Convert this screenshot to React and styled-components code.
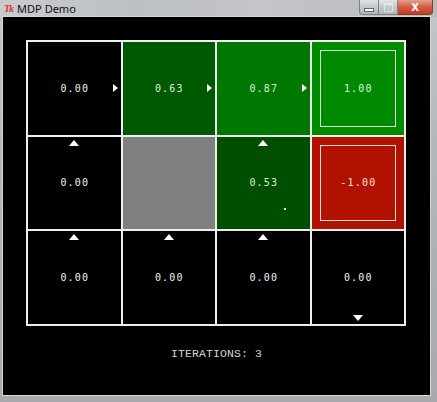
import React from "react";
import styled, { createGlobalStyle } from "styled-components";

const GlobalStyle = createGlobalStyle`
  html, body {
    margin: 0;
    padding: 0;
    background: #a9abae;
    overflow: hidden;
  }
`;

const Window = styled.div`
  width: 437px;
  height: 402px;
  display: flex;
  flex-direction: column;
  background: linear-gradient(180deg, #c4c7ca 0%, #b3b6b9 40%, #a7a9ac 100%);
  box-sizing: border-box;
`;

const TitleBar = styled.div`
  height: 17px;
  display: flex;
  align-items: flex-start;
  justify-content: space-between;
  background: linear-gradient(90deg, #c9cbce 0%, #bcbfc3 30%, #c3c5c8 60%, #b9bcbf 100%);
`;

const TitleLeft = styled.div`
  display: flex;
  align-items: center;
  gap: 4px;
  padding: 2px 0 0 4px;
  height: 13px;
`;

const TkIcon = styled.span`
  font-family: "Liberation Serif", serif;
  font-style: italic;
  font-weight: bold;
  font-size: 10px;
  line-height: 10px;
  color: #e0352a;
  letter-spacing: -1px;
`;

const Title = styled.span`
  font-family: "Noto Sans", "Liberation Sans", sans-serif;
  font-size: 11px;
  line-height: 12px;
  color: #111;
`;

const Buttons = styled.div`
  display: flex;
  margin-right: 4px;
`;

const CtlButton = styled.div`
  width: ${(p) => p.w}px;
  height: 15px;
  box-sizing: border-box;
  border: 1px solid ${(p) => (p.close ? "#8a3a2c" : "#7d8084")};
  border-top: none;
  border-left: ${(p) => (p.first ? "1px solid #7d8084" : "none")};
  border-radius: ${(p) => (p.first ? "0 0 0 4px" : p.close ? "0 0 4px 0" : "0")};
  background: ${(p) =>
    p.close
      ? "linear-gradient(180deg, #e6a08c 0%, #d4644a 45%, #c2391f 100%)"
      : "linear-gradient(180deg, #e2e4e6 0%, #c8cbce 45%, #b2b6ba 100%)"};
  display: flex;
  align-items: center;
  justify-content: center;
  color: #fff;
  font-family: "DejaVu Sans", sans-serif;
  font-weight: bold;
  font-size: 10px;
`;

const MinGlyph = styled.div`
  width: 8px;
  height: 2px;
  margin-top: 5px;
  background: #fff;
  border: 1px solid #666;
`;

const MaxGlyph = styled.div`
  width: 7px;
  height: 6px;
  border: 1px solid #eee;
  border-top-width: 2px;
  opacity: 0.7;
`;

const Client = styled.div`
  flex: 1;
  margin: 0 7px 7px 3px;
  background: #000;
  box-shadow: 0 0 0 1px #d4d6d8;
  display: flex;
  flex-direction: column;
  align-items: flex-start;
  padding: 23px 0 0 23px;
  box-sizing: border-box;
`;

const Grid = styled.div`
  display: grid;
  grid-template-columns: repeat(4, 92.5px);
  grid-template-rows: repeat(3, 92.5px);
  gap: 2px;
  padding: 2px;
  background: #eeeeee;
`;

const Cell = styled.div`
  position: relative;
  background: ${(p) => p.bg};
  display: flex;
  align-items: center;
  justify-content: center;
`;

const Value = styled.span`
  font-family: "DejaVu Sans Mono", monospace;
  font-size: 10px;
  letter-spacing: 1.2px;
  padding-left: 1.2px;
  color: ${(p) => p.color || "#f2f2f2"};
`;

const TerminalBox = styled.div`
  position: absolute;
  inset: 8px;
  border: 1.5px solid ${(p) => p.edge};
`;

const Arrow = styled.div`
  position: absolute;
  width: 0;
  height: 0;
  ${(p) =>
    p.dir === "right" &&
    `right: 3px; top: 42px;
     border-top: 4.5px solid transparent;
     border-bottom: 4.5px solid transparent;
     border-left: 5px solid #fff;`}
  ${(p) =>
    p.dir === "up" &&
    `top: 3px; left: 41px;
     border-left: 5px solid transparent;
     border-right: 5px solid transparent;
     border-bottom: 6px solid #fff;`}
  ${(p) =>
    p.dir === "down" &&
    `bottom: 3px; left: 41px;
     border-left: 5px solid transparent;
     border-right: 5px solid transparent;
     border-top: 6px solid #fff;`}
`;

const Dot = styled.div`
  position: absolute;
  left: 67px;
  top: 71px;
  width: 2px;
  height: 2px;
  background: #e0f0e0;
`;

const Iterations = styled.div`
  align-self: center;
  margin: 21px 0 0 -23px;
  font-family: "Liberation Mono", monospace;
  font-size: 11.5px;
  color: #d4d4d4;
  letter-spacing: 0.1px;
`;

const cells = [
  { v: "0.00", bg: "#000", arrow: "right" },
  { v: "0.63", bg: "#005800", arrow: "right", color: "#d4f0d4" },
  { v: "0.87", bg: "#007800", arrow: "right", color: "#d4f0d4" },
  { v: "1.00", bg: "#008a00", terminal: "#d8f4d8", color: "#d8f4d8" },
  { v: "0.00", bg: "#000", arrow: "up" },
  { wall: true, bg: "#808080" },
  { v: "0.53", bg: "#004f00", arrow: "up", dot: true, color: "#d4f0d4" },
  { v: "-1.00", bg: "#b01100", terminal: "#f4dcd8", color: "#f6e0dc" },
  { v: "0.00", bg: "#000", arrow: "up" },
  { v: "0.00", bg: "#000", arrow: "up" },
  { v: "0.00", bg: "#000", arrow: "up" },
  { v: "0.00", bg: "#000", arrow: "down" },
];

const App = () => {
  return (
    <>
      <GlobalStyle />
      <Window>
        <TitleBar>
          <TitleLeft>
            <TkIcon>Tk</TkIcon>
            <Title>MDP Demo</Title>
          </TitleLeft>
          <Buttons>
            <CtlButton w={20} first>
              <MinGlyph />
            </CtlButton>
            <CtlButton w={19}>
              <MaxGlyph />
            </CtlButton>
            <CtlButton w={35} close>
              X
            </CtlButton>
          </Buttons>
        </TitleBar>
        <Client>
          <Grid>
            {cells.map((c, i) => (
              <Cell key={i} bg={c.bg}>
                {c.terminal && <TerminalBox edge={c.terminal} />}
                {c.arrow && <Arrow dir={c.arrow} />}
                {c.dot && <Dot />}
                {!c.wall && <Value color={c.color}>{c.v}</Value>}
              </Cell>
            ))}
          </Grid>
          <Iterations>ITERATIONS: 3</Iterations>
        </Client>
      </Window>
    </>
  );
};

export default App;
